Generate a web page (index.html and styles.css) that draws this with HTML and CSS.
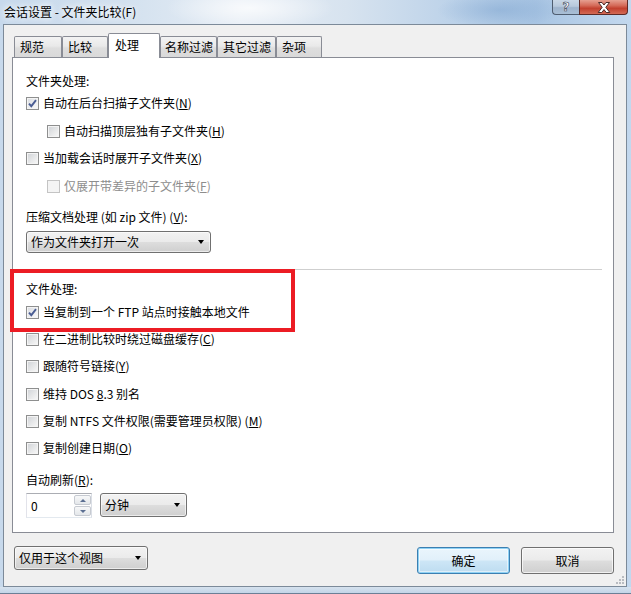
FILE: index.html
```html
<!DOCTYPE html>
<html lang="zh-CN">
<head>
<meta charset="utf-8">
<title>会话设置 - 文件夹比较(F)</title>
<link rel="stylesheet" href="styles.css">
</head>
<body>
<div class="window">
  <div class="titlebar">
    <div class="title">会话设置 - 文件夹比较(F)</div>
    <div class="caption">
      <div class="cap-btn help">?</div>
      <div class="cap-btn close">
        <svg width="14" height="11" viewBox="0 0 14 11"><path d="M1.5 0.5 L5 0.5 L7 3 L9 0.5 L12.5 0.5 L8.8 5.3 L12.8 10.5 L9.2 10.5 L7 7.6 L4.8 10.5 L1.2 10.5 L5.2 5.3 Z" fill="#ffffff" stroke="#4b2a28" stroke-width="1" stroke-linejoin="round"/></svg>
      </div>
    </div>
  </div>

  <div class="client">
    <div class="tabs">
      <div class="tab t1">规范</div>
      <div class="tab t2">比较</div>
      <div class="tab active t3">处理</div>
      <div class="tab t4">名称过滤</div>
      <div class="tab t5">其它过滤</div>
      <div class="tab t6">杂项</div>
    </div>

    <div class="panel">
      <div class="label first">文件夹处理:</div>
      <div class="row r-tight">
        <span class="cb checked"><svg width="11" height="11" viewBox="0 0 11 11"><path d="M2 5.6 L4.3 8.2 L9 2.2" fill="none" stroke="#4a5d93" stroke-width="1.9"/></svg></span>
        <span>自动在后台扫描子文件夹(<u>N</u>)</span>
      </div>
      <div class="row indent r8">
        <span class="cb"></span>
        <span>自动扫描顶层独有子文件夹(<u>H</u>)</span>
      </div>
      <div class="row r7">
        <span class="cb"></span>
        <span>当加载会话时展开子文件夹(<u>X</u>)</span>
      </div>
      <div class="row indent r8 disabled">
        <span class="cb"></span>
        <span>仅展开带差异的子文件夹(<u>F</u>)</span>
      </div>

      <div class="label l-arch">压缩文档处理 (如 zip 文件) (<u>V</u>):</div>
      <div class="combo combo-arch">
        <span>作为文件夹打开一次</span>
        <span class="arrow"></span>
      </div>

      <div class="sep"></div>

      <div class="label l-file">文件处理:</div>
      <div class="row r-ftp">
        <span class="cb checked"><svg width="11" height="11" viewBox="0 0 11 11"><path d="M2 5.6 L4.3 8.2 L9 2.2" fill="none" stroke="#4a5d93" stroke-width="1.9"/></svg></span>
        <span>当复制到一个 FTP 站点时接触本地文件</span>
      </div>
      <div class="row r7">
        <span class="cb"></span>
        <span>在二进制比较时绕过磁盘缓存(<u>C</u>)</span>
      </div>
      <div class="row r7">
        <span class="cb"></span>
        <span>跟随符号链接(<u>Y</u>)</span>
      </div>
      <div class="row r8">
        <span class="cb"></span>
        <span>维持 DOS <u>8</u>.3 别名</span>
      </div>
      <div class="row r7">
        <span class="cb"></span>
        <span>复制 NTFS 文件权限(需要管理员权限) (<u>M</u>)</span>
      </div>
      <div class="row r7">
        <span class="cb"></span>
        <span>复制创建日期(<u>O</u>)</span>
      </div>

      <div class="label l-refresh">自动刷新(<u>R</u>):</div>
      <div class="refresh-row">
        <div class="spin">
          <span class="spin-value">0</span>
          <div class="spin-btns">
            <div class="spin-btn"><span class="tri-up"></span></div>
            <div class="spin-btn"><span class="tri-down"></span></div>
          </div>
        </div>
        <div class="combo combo-unit">
          <span>分钟</span>
          <span class="arrow"></span>
        </div>
      </div>
    </div>

    <div class="footer">
      <div class="combo combo-view">
        <span>仅用于这个视图</span>
        <span class="arrow"></span>
      </div>
      <div class="buttons">
        <div class="btn default">确定</div>
        <div class="btn">取消</div>
      </div>
      <svg class="grip" width="10" height="10" viewBox="0 0 10 10">
        <g fill="#b9bcc1">
          <rect x="7" y="1" width="2" height="2"/>
          <rect x="4" y="4" width="2" height="2"/>
          <rect x="7" y="4" width="2" height="2"/>
          <rect x="1" y="7" width="2" height="2"/>
          <rect x="4" y="7" width="2" height="2"/>
          <rect x="7" y="7" width="2" height="2"/>
        </g>
      </svg>
    </div>
  </div>

  <div class="frame-bottom"></div>

  <div class="highlight"></div>
</div>
</body>
</html>
```

FILE: styles.css
```css
* {
  box-sizing: border-box;
}

html, body {
  margin: 0;
  padding: 0;
}

body {
  width: 631px;
  height: 594px;
  overflow: hidden;
  font-family: "Noto Sans CJK SC", "Microsoft YaHei", "Liberation Sans", sans-serif;
  font-size: 12px;
  color: #000;
}

u {
  text-decoration: underline;
  text-underline-offset: 1px;
}

.window {
  position: relative;
  width: 631px;
  height: 594px;
  display: flex;
  flex-direction: column;
  background:
    radial-gradient(ellipse 120px 30px at 250px 8px, rgba(255,255,255,0.75), rgba(255,255,255,0) 70%),
    radial-gradient(ellipse 90px 25px at 500px 10px, rgba(120,160,205,0.45), rgba(120,160,205,0) 70%),
    linear-gradient(90deg, #c7d9ec 0%, #d3e1ef 20%, #e6edf5 38%, #d7e3ef 55%, #bcd2e9 72%, #a9c5e3 85%, #c3d8ee 100%);
}

/* ---------- title bar ---------- */
.titlebar {
  height: 24px;
  display: flex;
  justify-content: space-between;
  align-items: flex-start;
}

.title {
  padding-left: 4px;
  line-height: 23px;
  font-size: 12px;
  color: #000;
  text-shadow: 0 0 6px #fff, 0 0 10px #fff;
}

.caption {
  display: flex;
  margin-right: 3px;
}

.cap-btn {
  height: 15px;
  border: 1px solid #4f5d70;
  border-top: none;
  display: flex;
  align-items: center;
  justify-content: center;
}

.help {
  width: 27px;
  border-radius: 0 0 0 4px;
  border-right: none;
  background: linear-gradient(#c9d7e6 0%, #b7c8dc 45%, #9eb3cc 55%, #a9bfd6 100%);
  color: #fff;
  font-family: "DejaVu Sans", sans-serif;
  font-weight: bold;
  font-size: 12px;
  line-height: 13px;
  -webkit-text-stroke: 0.6px #3a4658;
}

.close {
  width: 49px;
  border-radius: 0 0 4px 0;
  border-color: #5e2a26;
  background: linear-gradient(#e6a091 0%, #d46a58 40%, #c2412f 60%, #d36a55 100%);
}

/* ---------- client area ---------- */
.client {
  margin: 0 4px 0 3px;
  height: 563px;
  border: 1px solid #7c8a99;
  background: #f0f0f0;
  padding: 8px 0 0 8px;
  display: flex;
  flex-direction: column;
}

.frame-bottom {
  flex: 1;
  background: linear-gradient(#d6e2ee, #c3d5e8);
  border-bottom: 1px solid #6b7f96;
}

/* ---------- tabs ---------- */
.tabs {
  display: flex;
  align-items: flex-end;
  height: 24px;
  padding-left: 2px;
  position: relative;
  z-index: 1;
}

.tab {
  height: 21px;
  border: 1px solid #898c95;
  border-bottom: none;
  border-radius: 2px 2px 0 0;
  background: linear-gradient(#f3f3f3 0%, #e9e9e9 45%, #dedede 55%, #d9d9d9 100%);
  padding-left: 5px;
  line-height: 19px;
  white-space: nowrap;
}

.tab.active {
  height: 25px;
  margin-bottom: -1px;
  background: #fff;
  padding-left: 6px;
  line-height: 21px;
}

.t1 { width: 48px; }
.t2 { width: 46px; }
.t3 { width: 52px; }
.t4 { width: 57px; padding-left: 4px; }
.t5 { width: 59px; }
.t6 { width: 46px; }

/* ---------- panel ---------- */
.panel {
  width: 602px;
  height: 476px;
  background: #fff;
  border: 1px solid #898c95;
  padding-left: 13px;
  display: flex;
  flex-direction: column;
  align-items: flex-start;
}

.label {
  height: 20px;
  line-height: 20px;
  white-space: nowrap;
}

.label.first { margin-top: 13px; }
.l-arch { margin-top: 11px; }
.l-file { margin-top: 9px; }
.l-refresh { margin-top: 12px; }

.row {
  height: 20px;
  display: flex;
  align-items: center;
  gap: 4px;
  white-space: nowrap;
  line-height: 20px;
}

.r-tight { margin-top: 2px; }
.r-ftp { margin-top: 3px; }
.r7 { margin-top: 7px; }
.r8 { margin-top: 8px; }

.indent { margin-left: 21px; }

.cb {
  width: 13px;
  height: 13px;
  flex: none;
  border: 1px solid #8e8f8f;
  background: linear-gradient(135deg, #cfd2d6 0%, #e9eaeb 60%, #f9f9f9 100%);
  box-shadow: inset 0 0 0 1px #f4f4f4;
  display: flex;
  align-items: center;
  justify-content: center;
}

.cb.checked {
  background: linear-gradient(135deg, #d8dbe0 0%, #eeeff1 60%, #fafafa 100%);
}

.disabled {
  color: #8d8d8d;
}

.disabled .cb {
  border-color: #c4c4c4;
  background: #f4f4f4;
  box-shadow: none;
}

.sep {
  margin-top: 16px;
  width: 576px;
  height: 1px;
  background: #cfcfcf;
}

/* ---------- combo boxes ---------- */
.combo {
  display: flex;
  align-items: center;
  justify-content: space-between;
  border: 1px solid #707070;
  border-radius: 3px;
  background: linear-gradient(#f2f2f2 0%, #ebebeb 48%, #dddddd 52%, #cfcfcf 100%);
  box-shadow: inset 0 0 0 1px rgba(255,255,255,0.6);
  padding: 0 4px 0 4px;
  line-height: 18px;
  white-space: nowrap;
}

.arrow {
  width: 0;
  height: 0;
  border-left: 3.5px solid transparent;
  border-right: 3.5px solid transparent;
  border-top: 4px solid #000;
  margin-right: 2px;
}

.combo-arch {
  margin-top: 4px;
  width: 185px;
  height: 22px;
}

.refresh-row {
  margin-top: 3px;
  display: flex;
  align-items: flex-start;
  gap: 8px;
}

.combo-unit {
  width: 87px;
  height: 24px;
}

.spin {
  width: 66px;
  height: 25px;
  border: 1px solid #abadb3;
  border-left-color: #e2e3ea;
  border-right-color: #dbdfe6;
  border-bottom-color: #e3e9ef;
  background: #fff;
  display: flex;
  justify-content: space-between;
  padding: 1px 0 1px 4px;
}

.spin-value {
  line-height: 21px;
}

.spin-btns {
  width: 17px;
  display: flex;
  flex-direction: column;
  gap: 1px;
}

.spin-btn {
  flex: 1;
  border: 1px solid #c6cad1;
  border-radius: 2px;
  background: linear-gradient(#f7f8f9, #e4e7ea);
  display: flex;
  align-items: center;
  justify-content: center;
}

.tri-up, .tri-down {
  width: 0;
  height: 0;
  border-left: 3px solid transparent;
  border-right: 3px solid transparent;
}

.tri-up {
  border-bottom: 3px solid #5b6f92;
}

.tri-down {
  border-top: 3px solid #5b6f92;
}

/* ---------- footer ---------- */
.footer {
  flex: 1;
  display: flex;
  align-items: flex-start;
  padding-top: 13px;
  padding-left: 2px;
  position: relative;
}

.combo-view {
  width: 134px;
  height: 24px;
}

.buttons {
  margin-left: auto;
  margin-right: 12px;
  margin-top: 1px;
  display: flex;
  gap: 11px;
}

.btn {
  width: 93px;
  height: 27px;
  border: 1px solid #707070;
  border-radius: 3px;
  background: linear-gradient(#f2f2f2 0%, #ebebeb 48%, #dddddd 52%, #cfcfcf 100%);
  box-shadow: inset 0 0 0 1px rgba(255,255,255,0.7);
  display: flex;
  align-items: center;
  justify-content: center;
}

.btn.default {
  border-color: #3c7fb1;
  background: linear-gradient(#eaf5fc 0%, #e1f0fa 48%, #cde6f6 52%, #bddcf0 100%);
  box-shadow: inset 0 0 0 1px #8fd2f5, inset 0 0 0 2px rgba(255,255,255,0.5);
}

.grip {
  position: absolute;
  right: 1px;
  bottom: 1px;
}

/* ---------- annotation overlay ---------- */
.highlight {
  position: absolute;
  left: 10px;
  top: 269px;
  width: 285px;
  height: 63px;
  border: 4px solid #ec1c24;
}
```
